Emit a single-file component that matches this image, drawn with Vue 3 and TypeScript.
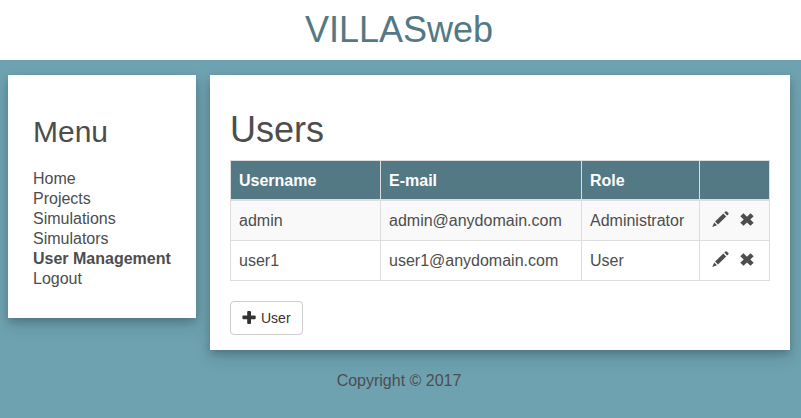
<script setup lang="ts">
interface User {
  username: string
  mail: string
  role: string
}

const menu: string[] = ['Home', 'Projects', 'Simulations', 'Simulators', 'User Management', 'Logout']
const current = 'User Management'

const users: User[] = [
  { username: 'admin', mail: 'admin@anydomain.com', role: 'Administrator' },
  { username: 'user1', mail: 'user1@anydomain.com', role: 'User' },
]
</script>

<template>
  <div class="app">
    <header class="app-header">
      <h1>VILLASweb</h1>
    </header>

    <div class="app-body">
      <nav class="menu panel">
        <h2>Menu</h2>
        <ul>
          <li v-for="item in menu" :key="item">
            <a :class="{ active: item === current }">{{ item }}</a>
          </li>
        </ul>
      </nav>

      <main class="content panel">
        <h1>Users</h1>
        <table>
          <colgroup>
            <col class="col-name" />
            <col class="col-mail" />
            <col class="col-role" />
            <col class="col-actions" />
          </colgroup>
          <thead>
            <tr>
              <th>Username</th>
              <th>E-mail</th>
              <th>Role</th>
              <th></th>
            </tr>
          </thead>
          <tbody>
            <tr v-for="user in users" :key="user.username">
              <td>{{ user.username }}</td>
              <td>{{ user.mail }}</td>
              <td>{{ user.role }}</td>
              <td>
                <div class="actions">
                  <svg class="pencil" viewBox="0 0 17 16" aria-label="Edit">
                    <path d="M12.3 1.6L13.5 0.4Q14.1 -0.1 14.7 0.4L16.4 2.1Q16.9 2.7 16.4 3.3L15.2 4.5Z" />
                    <path d="M11.3 2.5L14.2 5.4L6 13.4L3.1 10.5Z" />
                    <path d="M2.2 11.5L5 14.3L0.2 15.9Z" />
                  </svg>
                  <svg class="remove" viewBox="0 0 14 13" aria-label="Delete">
                    <path d="M3.5 0.2L7 3.7L10.5 0.2L13.7 3.2L10.3 6.5L13.7 9.8L10.5 12.8L7 9.4L3.5 12.8L0.3 9.8L3.7 6.5L0.3 3.2Z" />
                  </svg>
                </div>
              </td>
            </tr>
          </tbody>
        </table>
        <button type="button">
          <svg class="plus" viewBox="0 0 14 13" aria-hidden="true">
            <path d="M5.5 0H8Q9 0 9 1V4.5H12.7Q13.7 4.5 13.7 5.5V7.2Q13.7 8.2 12.7 8.2H9V12Q9 13 8 13H6.2Q5.2 13 5.2 12V8.2H1.4Q0.4 8.2 0.4 7.2V5.5Q0.4 4.5 1.4 4.5H5.2V1Q5.2 0 6.2 0Z" />
          </svg>
          <span>User</span>
        </button>
      </main>
    </div>

    <footer>Copyright © 2017</footer>
  </div>
</template>

<style>
body {
  background: #6ea2b0;
}
</style>

<style scoped>
* {
  box-sizing: border-box;
}

.app {
  height: 418px;
  overflow: hidden;
  background: #6ea2b0;
  color: #4d4d4d;
  font-family: "Liberation Sans", Arial, sans-serif;
  font-size: 16px;
  line-height: 20px;
}

h1,
h2 {
  margin: 0;
  font-weight: normal;
}

.app-header {
  height: 60px;
  padding: 10px 3px 0 0;
  background: #fff;
  color: #527984;
  text-align: center;
}

h1 {
  font-size: 36px;
  line-height: 40px;
}

.app-body {
  display: flex;
  align-items: flex-start;
  gap: 14px;
  padding: 15px 11px 0 8px;
}

.panel {
  background: #fff;
  box-shadow: 0 4px 8px 0 rgba(0, 0, 0, 0.2), 0 9px 18px 0 rgba(0, 0, 0, 0.1);
}

.menu {
  flex: none;
  width: 188px;
  height: 243px;
  padding: 40px 25px 0;
}

.menu h2 {
  font-size: 30px;
  line-height: 33px;
}

.menu ul {
  margin: 21px 0 0;
  padding: 0;
  list-style: none;
}

.active {
  font-weight: bold;
}

.content {
  flex: 1;
  height: 275px;
  padding: 35px 20px 0;
}

table {
  width: 540px;
  margin-top: 10px;
  border-collapse: collapse;
  table-layout: fixed;
}

.col-name {
  width: 150px;
}

.col-mail {
  width: 201px;
}

.col-role {
  width: 118px;
}

.col-actions {
  width: 70px;
}

th,
td {
  height: 40px;
  padding: 0 8px;
  border: 1px solid #ddd;
  text-align: left;
  vertical-align: middle;
}

th {
  height: 39px;
  padding-top: 2px;
  border-bottom-width: 2px;
  background: #527984;
  color: #fff;
}

tbody tr:first-child td {
  height: 41px;
  padding-top: 1px;
}

tbody tr:nth-child(odd) {
  background: #f9f9f9;
}

svg {
  display: block;
  flex: none;
  fill: currentColor;
}

.actions {
  display: flex;
  align-items: center;
  gap: 11px;
  padding: 0 0 3px 4px;
}

.pencil {
  width: 17px;
  height: 16px;
}

.remove {
  width: 14px;
  height: 13px;
}

button {
  display: flex;
  align-items: center;
  gap: 5px;
  width: 73px;
  height: 34px;
  margin-top: 20px;
  padding: 0 0 0 11px;
  border: 1px solid #ccc;
  border-radius: 4px;
  background: #fff;
  color: #333;
  font: 14px/20px "Liberation Sans", Arial, sans-serif;
}

.plus {
  width: 14px;
  height: 13px;
  margin-bottom: 1px;
}

footer {
  padding: 21px 3px 0 0;
  text-align: center;
}
</style>
